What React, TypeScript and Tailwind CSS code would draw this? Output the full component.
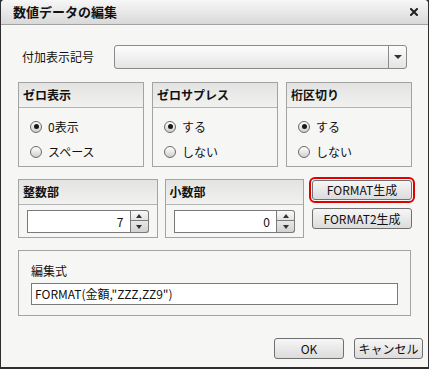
import { useState } from "react";

// ── 共通パーツ ────────────────────────────────────────────────────────────

const FONT = "font-['Noto_Sans_CJK_JP','Noto_Sans',sans-serif]";

function Radio({ label, checked }: { label: string; checked: boolean }) {
  return (
    <label className="flex h-[25px] items-center gap-[6px] text-[12px] text-[#111]">
      <span className="flex h-[12px] w-[12px] items-center justify-center rounded-full border border-[#6a6a6a] bg-gradient-to-b from-[#ffffff] to-[#cfcfcf]">
        {checked && <span className="h-[5px] w-[5px] rounded-full bg-[#1a1a1a]" />}
      </span>
      {label}
    </label>
  );
}

function GroupHeader({ title }: { title: string }) {
  return (
    <div className="flex h-[25px] items-center border-b border-[#b4b4b4] bg-gradient-to-b from-[#e3e4e2] to-[#f1f2f0] px-[4px] text-[12px] font-bold text-[#111]">
      {title}
    </div>
  );
}

function RadioGroup({ title, options, value }: { title: string; options: string[]; value: number }) {
  return (
    <div className="h-[85px] border border-[#a3a3a3]">
      <GroupHeader title={title} />
      <div className="flex flex-col pl-[11px] pt-[6px]">
        {options.map((o, i) => (
          <Radio key={o} label={o} checked={i === value} />
        ))}
      </div>
    </div>
  );
}

function Spinner({ title, value }: { title: string; value: number }) {
  return (
    <div className="h-[59px] border border-[#a3a3a3]">
      <GroupHeader title={title} />
      <div className="flex px-[8px] pt-[5px]">
        <div className="flex h-[23px] flex-1 items-center justify-end border border-[#7a7a7a] bg-white pr-[6px] text-[12px] text-[#111]">
          {value}
        </div>
        <div className="flex w-[18px] flex-col">
          <button className="flex h-[11px] items-center justify-center rounded-tr-[3px] border border-l-0 border-[#7a7a7a] bg-gradient-to-b from-[#fafafa] to-[#e2e2e2]">
            <span className="h-0 w-0 border-x-[3px] border-b-[4px] border-x-transparent border-b-[#333]" />
          </button>
          <button className="flex h-[12px] items-center justify-center rounded-br-[3px] border border-l-0 border-t-0 border-[#7a7a7a] bg-gradient-to-b from-[#e8e8e8] to-[#d2d2d2]">
            <span className="h-0 w-0 border-x-[3px] border-t-[4px] border-x-transparent border-t-[#333]" />
          </button>
        </div>
      </div>
    </div>
  );
}

function Btn({ label, className = "" }: { label: string; className?: string }) {
  return (
    <button
      className={`flex items-center justify-center rounded-[3px] border border-[#707070] bg-gradient-to-b from-[#f6f6f6] to-[#dcdcdc] text-[12px] text-[#111] ${className}`}
    >
      {label}
    </button>
  );
}

// ── ダイアログ本体 ──────────────────────────────────────────────────────────

export default function App() {
  const [formula] = useState('FORMAT(金額,"ZZZ,ZZ9")');

  return (
    <div className={`h-[369px] w-[429px] overflow-hidden bg-[#2e2e2e] ${FONT}`}>
      <div className="flex h-[367px] w-[427px] ml-[1px] flex-col rounded-t-[4px] bg-[#f6f7f5]">
        {/* タイトルバー */}
        <div className="flex h-[25px] items-center justify-between rounded-t-[4px] border-b border-[#a2a2a2] bg-gradient-to-b from-[#f7f7f7] to-[#d9d9d9] pl-[12px] pr-[10px]">
          <span className="text-[13px] font-bold text-[#111]">数値データの編集</span>
          <svg viewBox="0 0 8 8" className="h-[8px] w-[8px]" aria-hidden>
            <path d="M1 1L7 7M7 1L1 7" stroke="#222" strokeWidth="2" strokeLinecap="square" />
          </svg>
        </div>

        {/* 付加表示記号 */}
        <div className="mt-[20px] flex h-[24px] items-center pl-[21px]">
          <span className="w-[92px] text-[12px] text-[#111]">付加表示記号</span>
          <div className="flex h-[24px] w-[293px] rounded-[3px] border border-[#8a8a8a] bg-gradient-to-b from-[#fdfdfd] to-[#e4e4e4]">
            <div className="flex-1" />
            <div className="flex w-[18px] items-center justify-center border-l border-[#8a8a8a]">
              <span className="h-0 w-0 border-x-[4px] border-t-[4px] border-x-transparent border-t-[#333]" />
            </div>
          </div>
        </div>

        {/* ラジオグループ */}
        <div className="mt-[13px] grid grid-cols-3 gap-[8px] pl-[17px] pr-[16px]">
          <RadioGroup title="ゼロ表示" options={["0表示", "スペース"]} value={0} />
          <RadioGroup title="ゼロサプレス" options={["する", "しない"]} value={0} />
          <RadioGroup title="桁区切り" options={["する", "しない"]} value={0} />
        </div>

        {/* 整数部・小数部 */}
        <div className="mt-[12px] flex gap-[7px] pl-[17px] pr-[16px]">
          <div className="w-[140px]">
            <Spinner title="整数部" value={7} />
          </div>
          <div className="w-[140px]">
            <Spinner title="小数部" value={0} />
          </div>
          <div className="ml-[1px] flex flex-col gap-[8px] pt-[1px]">
            <Btn label="FORMAT生成" className="h-[20px] w-[100px] outline-2 outline-offset-[1px] outline-[#e00000]" />
            <Btn label="FORMAT2生成" className="h-[21px] w-[100px]" />
          </div>
        </div>

        {/* 編集式 */}
        <div className="ml-[17px] mt-[12px] h-[66px] w-[393px] border border-[#a3a3a3] px-[12px] pt-[12px]">
          <div className="text-[12px] leading-[16px] text-[#111]">編集式</div>
          <div className="mt-[4px] flex h-[22px] items-center border border-[#7a7a7a] bg-white px-[3px] text-[12px] text-[#111]">
            {formula}
          </div>
        </div>

        {/* OK / キャンセル */}
        <div className="mt-[22px] flex justify-end gap-[10px] pr-[5px]">
          <Btn label="OK" className="h-[21px] w-[70px]" />
          <Btn label="キャンセル" className="h-[21px] w-[69px]" />
        </div>
      </div>
    </div>
  );
}
